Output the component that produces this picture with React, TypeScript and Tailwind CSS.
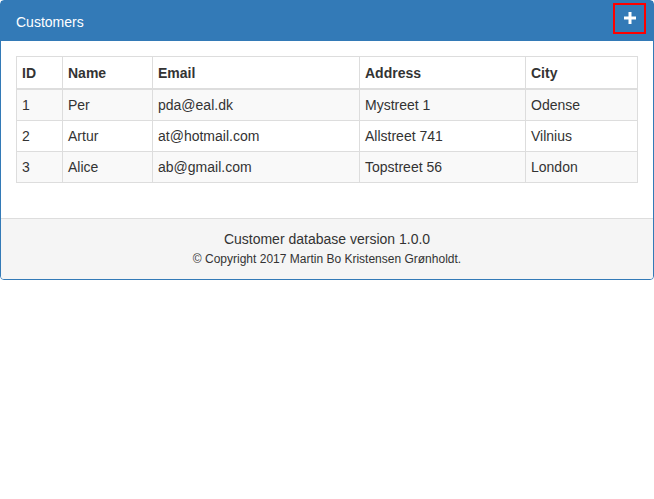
import React from "react";

const customers = [
  { id: 1, name: "Per", email: "pda@eal.dk", address: "Mystreet 1", city: "Odense" },
  { id: 2, name: "Artur", email: "at@hotmail.com", address: "Allstreet 741", city: "Vilnius" },
  { id: 3, name: "Alice", email: "ab@gmail.com", address: "Topstreet 56", city: "London" },
];

const PlusIcon = () => (
  <svg width="12" height="12" viewBox="0 0 12 12" fill="white">
    <rect x="4.5" y="0" width="3" height="12" />
    <rect x="0" y="4.5" width="12" height="3" />
  </svg>
);

export default function App() {
  return (
    <div className="min-h-[499px] bg-white text-[14px] leading-5 text-[#333] font-['Liberation_Sans',Arial,sans-serif]">
      <div className="rounded-[4px] border border-[#337ab7] bg-white">
        <div className="flex h-[40px] items-center justify-between bg-[#337ab7] pl-[15px] pr-[7px] text-white">
          <h3 className="pt-[1px] text-[14px] leading-[18px]">Customers</h3>
          <button className="mb-[6px] flex h-[31px] w-[33px] items-center justify-center border-2 border-[#ff0000]">
            <PlusIcon />
          </button>
        </div>

        <div className="p-[15px]">
          <table className="mb-5 w-full border-collapse border border-[#ddd] leading-[20px]">
            <thead>
              <tr className="text-left font-bold">
                <th className="w-[46px] border border-b-2 border-[#ddd] px-[5px] pt-[6px] pb-[5px]">ID</th>
                <th className="w-[90px] border border-b-2 border-[#ddd] px-[5px] pt-[6px] pb-[5px]">Name</th>
                <th className="w-[207px] border border-b-2 border-[#ddd] px-[5px] pt-[6px] pb-[5px]">Email</th>
                <th className="w-[166px] border border-b-2 border-[#ddd] px-[5px] pt-[6px] pb-[5px]">Address</th>
                <th className="border border-b-2 border-[#ddd] px-[5px] pt-[6px] pb-[5px]">City</th>
              </tr>
            </thead>
            <tbody>
              {customers.map((c, i) => (
                <tr key={c.id} className={i % 2 === 0 ? "bg-[#f9f9f9]" : "bg-white"}>
                  <td className="border border-[#ddd] p-[5px]">{c.id}</td>
                  <td className="border border-[#ddd] p-[5px]">{c.name}</td>
                  <td className="border border-[#ddd] p-[5px]">{c.email}</td>
                  <td className="border border-[#ddd] p-[5px]">{c.address}</td>
                  <td className="border border-[#ddd] p-[5px]">{c.city}</td>
                </tr>
              ))}
            </tbody>
          </table>
        </div>

        <div className="rounded-b-[3px] border-t border-[#ddd] bg-[#f5f5f5] px-[15px] py-[10px] text-center">
          <p>Customer database version 1.0.0</p>
          <p className="text-[12px] leading-[20px]">© Copyright 2017 Martin Bo Kristensen Grønholdt.</p>
        </div>
      </div>
    </div>
  );
}
